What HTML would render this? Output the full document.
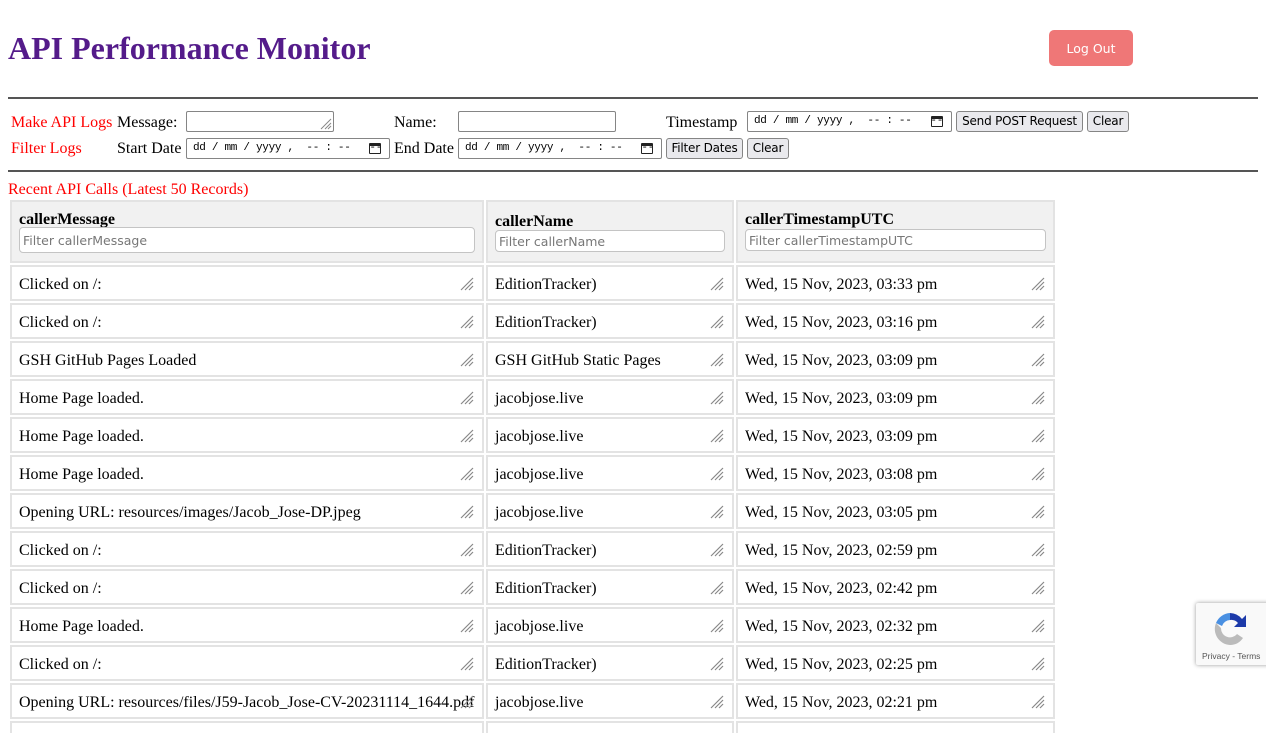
<!DOCTYPE html>
<html><head><meta charset="utf-8"><style>
*{box-sizing:border-box}
html,body{margin:0;width:1266px;height:733px;overflow:hidden}
body{background:#fff;font-family:"Liberation Serif",serif;font-size:16px;color:#000;position:relative}
.a{position:absolute;white-space:nowrap}
h1{position:absolute;left:8px;top:30px;margin:0;font-size:32px;font-weight:bold;color:#541b8a;font-family:"Liberation Serif",serif}
.logout{position:absolute;left:1049px;top:30px;width:84px;height:36px;background:#ef7777;border-radius:5px;color:#fff;font:12.5px "DejaVu Sans",sans-serif;text-align:center;line-height:38px}
.hr{position:absolute;left:8px;width:1250px;height:2px;background:#555}
.red{color:red}
.inp{position:absolute;border:1px solid #858585;border-radius:2px;height:21px;background:#fff}
.dt{position:absolute;border:1px solid #858585;border-radius:2px;height:21px;background:#fff;font:11px "Liberation Mono",monospace;letter-spacing:-0.3px;padding:3px 0 0 6px;white-space:pre;overflow:hidden}
.dt i{position:absolute;right:8px;top:4px;width:12px;height:11px;border:1.5px solid #222;border-top-width:3px;border-radius:1px}
.btn{position:absolute;border:1px solid #858585;border-radius:3px;height:21px;background:#e9e9ed;font:12px "DejaVu Sans",sans-serif;text-align:center;line-height:19px;white-space:nowrap;letter-spacing:-0.2px}
.cell{position:absolute;border:2px solid #e3e3e3;height:36px;background:#fff}
.cell span{position:absolute;left:7px;top:9px;white-space:nowrap}
.hc{position:absolute;border:2px solid #e3e3e3;background:#f1f1f1;top:200px;height:63px}
.hc b{position:absolute;left:7px;white-space:nowrap}
.f{position:absolute;left:7px;height:22px;border:1px solid #c4c4c4;border-radius:4px;background:#fff;font:12.5px "DejaVu Sans",sans-serif;color:#777;padding:3px 3px 0}
.g{position:absolute;right:8px;top:10px}
</style></head><body>
<h1>API Performance Monitor</h1>
<div class="logout">Log Out</div>
<div class="hr" style="top:97px"></div>
<div class="a red" style="left:11px;top:114px">Make API Logs</div>
<div class="a" style="left:117px;top:114px">Message:</div>
<div class="inp" style="left:186px;top:111px;width:148px"><svg width="14" height="14" style="position:absolute;right:1px;bottom:1px" stroke="#888"><path d="M13 3L3 13M13 7L7 13M13 10L10 13"/></svg></div>
<div class="a" style="left:394px;top:114px">Name:</div>
<div class="inp" style="left:458px;top:111px;width:158px"></div>
<div class="a" style="left:666px;top:114px">Timestamp</div>
<div class="dt" style="left:747px;top:111px;width:205px">dd / mm / yyyy ,  -- : --   --<i></i></div>
<div class="btn" style="left:956px;top:111px;width:127px">Send POST Request</div>
<div class="btn" style="left:1087px;top:111px;width:42px">Clear</div>
<div class="a red" style="left:11px;top:140px">Filter Logs</div>
<div class="a" style="left:117px;top:140px">Start Date</div>
<div class="dt" style="left:186px;top:138px;width:204px">dd / mm / yyyy ,  -- : --   --<i></i></div>
<div class="a" style="left:394px;top:140px">End Date</div>
<div class="dt" style="left:458px;top:138px;width:204px">dd / mm / yyyy ,  -- : --   --<i></i></div>
<div class="btn" style="left:666px;top:138px;width:77px">Filter Dates</div>
<div class="btn" style="left:747px;top:138px;width:42px">Clear</div>
<div class="hr" style="top:170px"></div>
<div class="a red" style="left:8px;top:181px">Recent API Calls (Latest 50 Records)</div>
<div class="hc" style="left:10px;width:474px"><b style="top:9px">callerMessage</b><div class="f" style="top:25px;width:456px;height:26px;padding-top:5px">Filter callerMessage</div></div>
<div class="hc" style="left:486px;width:248px"><b style="top:11px">callerName</b><div class="f" style="top:28px;width:230px">Filter callerName</div></div>
<div class="hc" style="left:736px;width:319px"><b style="top:9px">callerTimestampUTC</b><div class="f" style="top:27px;width:301px">Filter callerTimestampUTC</div></div>
<div id="rows"></div>
<div style="position:absolute;left:1196px;top:603px;width:76px;height:62px;background:#f9f9f9;box-shadow:0 0 4px #999;border-radius:2px">
<svg width="36" height="36" style="position:absolute;left:16px;top:8px" viewBox="0 0 36 36"><path d="M18 2A16 16 0 0 0 4 12l6 3a9 9 0 0 1 8-6z" fill="#4a90e2"/><path d="M4 12a16 16 0 0 0 14 22 16 16 0 0 0 13-7l-6-4a9 9 0 0 1-16-6z" fill="#bbb"/><path d="M18 2a16 16 0 0 1 12 6l4-4v12H22l4-4a9 9 0 0 0-8-3z" fill="#1c3aa9"/></svg>
<div style="position:absolute;left:6px;top:48px;font:8.5px 'Liberation Sans',sans-serif;color:#555">Privacy - Terms</div></div>
<script>
var d=[["Clicked on /:","EditionTracker)","Wed, 15 Nov, 2023, 03:33 pm"],["Clicked on /:","EditionTracker)","Wed, 15 Nov, 2023, 03:16 pm"],["GSH GitHub Pages Loaded","GSH GitHub Static Pages","Wed, 15 Nov, 2023, 03:09 pm"],["Home Page loaded.","jacobjose.live","Wed, 15 Nov, 2023, 03:09 pm"],["Home Page loaded.","jacobjose.live","Wed, 15 Nov, 2023, 03:09 pm"],["Home Page loaded.","jacobjose.live","Wed, 15 Nov, 2023, 03:08 pm"],["Opening URL: resources/images/Jacob_Jose-DP.jpeg","jacobjose.live","Wed, 15 Nov, 2023, 03:05 pm"],["Clicked on /:","EditionTracker)","Wed, 15 Nov, 2023, 02:59 pm"],["Clicked on /:","EditionTracker)","Wed, 15 Nov, 2023, 02:42 pm"],["Home Page loaded.","jacobjose.live","Wed, 15 Nov, 2023, 02:32 pm"],["Clicked on /:","EditionTracker)","Wed, 15 Nov, 2023, 02:25 pm"],["Opening URL: resources/files/J59-Jacob_Jose-CV-20231114_1644.pdf","jacobjose.live","Wed, 15 Nov, 2023, 02:21 pm"],["","",""]];
var cols=[[10,474],[486,248],[736,319]],h="",g='<svg class="g" width="14" height="14" stroke="#888" stroke-width="1.2"><path d="M13 1L1 13M13 5L5 13M13 9L9 13"/></svg>';
d.forEach(function(r,i){var t=265+38*i;cols.forEach(function(c,j){h+='<div class="cell" style="left:'+c[0]+'px;top:'+t+'px;width:'+c[1]+'px"><span>'+r[j]+'</span>'+(i<12?g:'')+'</div>';});});
document.getElementById("rows").innerHTML=h;
</script>
</body></html>
